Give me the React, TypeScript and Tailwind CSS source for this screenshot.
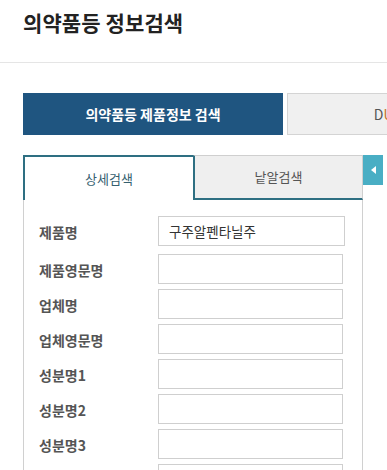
const font = { fontFamily: '"Noto Sans CJK KR", "Noto Sans", sans-serif' };

const fields = [
  { label: "제품명", value: "구주알펜타닐주" },
  { label: "제품영문명", value: "" },
  { label: "업체명", value: "" },
  { label: "업체영문명", value: "" },
  { label: "성분명1", value: "" },
  { label: "성분명2", value: "" },
  { label: "성분명3", value: "" },
  { label: "성분명4", value: "" },
];

export default function App() {
  return (
    <div className="w-full overflow-hidden bg-white" style={font}>
      {/* page title */}
      <div className="h-[63px] border-b border-[#e5e5e5] pl-[23px] pt-[7px]">
        <h1 className="text-[21px] leading-[30px] font-bold tracking-[0.1px] text-[#222]">
          의약품등 정보검색
        </h1>
      </div>

      <div className="w-[700px] pl-[23px] pt-[30px]">
        {/* search type buttons */}
        <div className="flex gap-[4px]">
          <button className="flex h-[42px] w-[260px] shrink-0 items-center justify-center bg-[#1f5580] text-[14px] font-bold text-white">
            의약품등 제품정보 검색
          </button>
          <button className="flex h-[42px] w-[260px] shrink-0 items-center justify-center border border-[#d4d4d4] bg-[#f0f0f0] text-[14px] text-[#555]">
            D<span className="text-[#c8742e]">UR</span>&nbsp;정보 검색
          </button>
        </div>

        {/* tabs + form */}
        <div className="mt-[20px] flex">
          <div className="w-[340px] shrink-0">
            <div className="flex h-[45px]">
              <div className="flex w-[170px] items-center justify-center border-t-2 border-l-2 border-[#2e6f82] bg-white text-[13px] text-[#35606f]">
                상세검색
              </div>
              <div className="flex w-[170px] items-center justify-center border-t border-r border-t-[#cfcfcf] border-r-[#cfcfcf] border-l-2 border-b-2 border-l-[#2e6f82] border-b-[#2e6f82] bg-[#efefef] text-[13px] text-[#555]">
                낱알검색
              </div>
            </div>
            <div className="border-l border-r border-[#d0d0d0] pl-[15px] pt-[16px] pb-[20px]">
              <div className="flex flex-col gap-[5px]">
                {fields.map((f, i) => (
                  <div key={f.label} className={`flex items-center ${i === 1 ? "mt-[3px]" : ""}`}>
                    <div className="w-[119px] shrink-0 pt-[3px] text-[14px] font-bold text-[#555]">
                      {f.label}
                    </div>
                    <input
                      readOnly
                      value={f.value}
                      className={`h-[30px] border border-[#cfcfcf] bg-white px-[10px] text-[13.5px] text-[#333] outline-none ${i === 0 ? "w-[187px]" : "w-[185px]"}`}
                    />
                  </div>
                ))}
              </div>
            </div>
          </div>
          <div className="flex h-[30px] w-[20px] shrink-0 items-center justify-center bg-[#49aec4]">
            <svg width="5" height="8" viewBox="0 0 5 8">
              <path d="M5 0 L0 4 L5 8 Z" fill="#fff" />
            </svg>
          </div>
        </div>
      </div>
    </div>
  );
}
